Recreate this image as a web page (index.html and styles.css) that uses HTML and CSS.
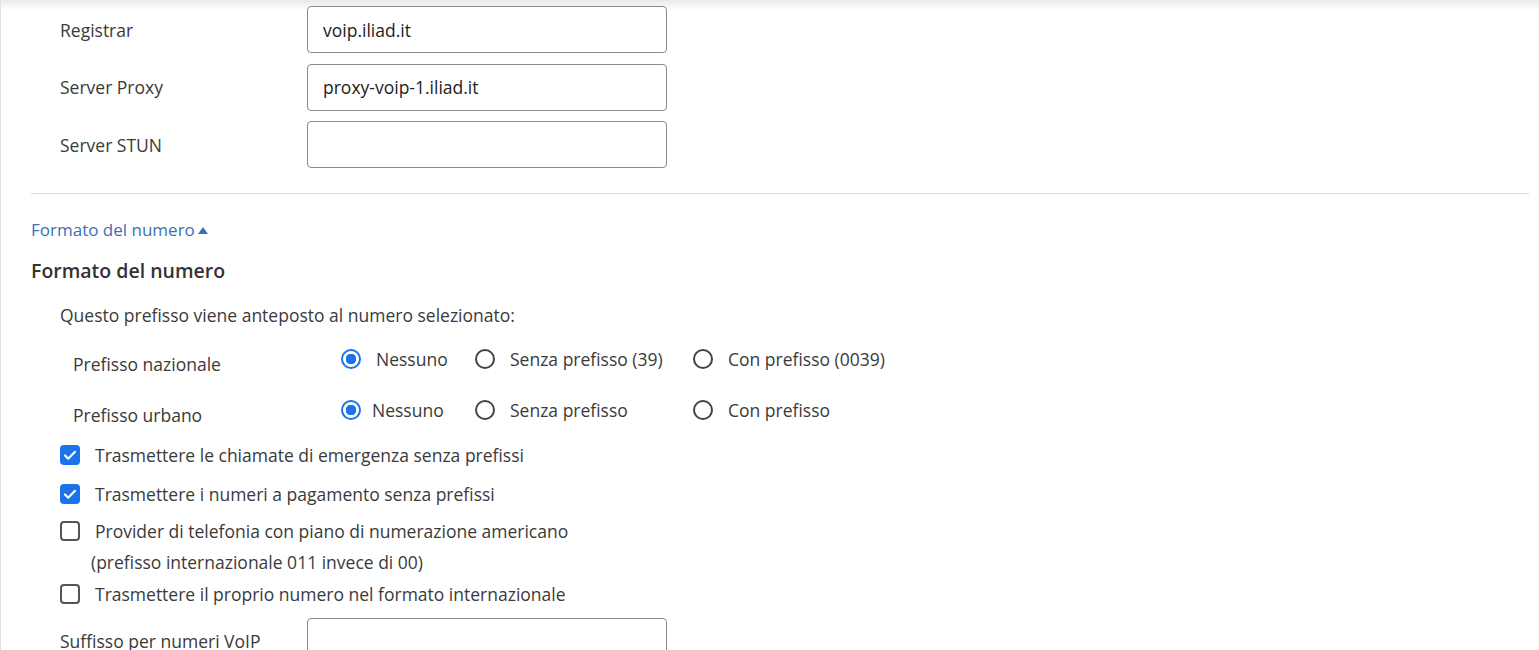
FILE: index.html
```html
<!DOCTYPE html>
<html lang="it">
<head>
    <meta charset="UTF-8">
    <title>Telefonia - Account VoIP</title>
    <link rel="stylesheet" href="styles.css">
</head>
<body>
    <div class="page">
        <div class="field-row">
            <label class="field-label" for="registrar">Registrar</label>
            <input class="text-input" id="registrar" type="text" value="voip.iliad.it">
        </div>
        <div class="field-row">
            <label class="field-label" for="proxy">Server Proxy</label>
            <input class="text-input" id="proxy" type="text" value="proxy-voip-1.iliad.it">
        </div>
        <div class="field-row">
            <label class="field-label" for="stun">Server STUN</label>
            <input class="text-input" id="stun" type="text" value="">
        </div>

        <hr class="divider">

        <a class="toggle-link" href="#">Formato del numero<span class="caret"></span></a>
        <h2 class="section-title">Formato del numero</h2>

        <p class="hint">Questo prefisso viene anteposto al numero selezionato:</p>

        <div class="radio-row">
            <span class="radio-label">Prefisso nazionale</span>
            <div class="radio-options">
                <label class="radio"><span class="dot checked"></span><span class="opt-text">Nessuno</span></label>
                <label class="radio"><span class="dot"></span>Senza prefisso (39)</label>
                <label class="radio"><span class="dot"></span>Con prefisso (0039)</label>
            </div>
        </div>
        <div class="radio-row second">
            <span class="radio-label">Prefisso urbano</span>
            <div class="radio-options">
                <label class="radio"><span class="dot checked"></span><span class="opt-text tight">Nessuno</span></label>
                <label class="radio"><span class="dot"></span>Senza prefisso</label>
                <label class="radio"><span class="dot"></span>Con prefisso</label>
            </div>
        </div>

        <ul class="checks">
            <li class="check"><span class="box checked"></span>Trasmettere le chiamate di emergenza senza prefissi</li>
            <li class="check"><span class="box checked"></span>Trasmettere i numeri a pagamento senza prefissi</li>
            <li class="check multi"><span class="box"></span>Provider di telefonia con piano di numerazione americano
                <span class="check-note">(prefisso internazionale 011 invece di 00)</span></li>
            <li class="check"><span class="box"></span>Trasmettere il proprio numero nel formato internazionale</li>
        </ul>

        <div class="field-row last">
            <label class="field-label" for="suffix">Suffisso per numeri VoIP</label>
            <input class="text-input" id="suffix" type="text" value="">
        </div>
    </div>
</body>
</html>
```

FILE: styles.css
```css
body {
    margin: 0;
    font-family: 'Open Sans', Lato, sans-serif;
    font-size: 17.5px;
    line-height: 20px;
    color: #3a3a3a;
    background: #fff;
}
.page {
    height: 646px;
    overflow: hidden;
    border-left: 1px solid #e2e2e2;
    border-bottom: 1px solid #dcdcdc;
    background: linear-gradient(#e9e9e9, #fff 10px) no-repeat;
    padding: 6px 10px 0 30px;
}
.field-row {
    display: flex;
    align-items: center;
    margin-bottom: 10.5px;
}
.field-label {
    width: 276px;
    padding-left: 29px;
    box-sizing: border-box;
}
.text-input {
    width: 360px;
    height: 47px;
    box-sizing: border-box;
    border: 1px solid #8a8a8a;
    border-radius: 4px;
    padding: 0 15px;
    font: inherit;
    color: #222;
}
.divider {
    border: none;
    border-top: 1px solid #d9d9d9;
    margin: 25px 0 0;
}
.toggle-link {
    display: inline-block;
    margin-top: 26px;
    color: #3b6fb6;
    text-decoration: none;
    font-size: 17px;
}
.caret {
    display: inline-block;
    width: 0;
    height: 0;
    margin-left: 3px;
    border-left: 5px solid transparent;
    border-right: 5px solid transparent;
    border-bottom: 7px solid #3b6fb6;
    vertical-align: 2px;
}
.section-title {
    font-size: 19.5px;
    line-height: 24px;
    font-weight: 600;
    color: #333;
    margin: 19px 0 0;
}
.hint {
    margin: 22px 0 0 29px;
}
.radio-row {
    display: flex;
    align-items: flex-start;
    margin-top: 24px;
}
.radio-row.second {
    margin-top: 26px;
}
.radio-label {
    width: 310px;
    padding-left: 42px;
    padding-top: 5px;
    box-sizing: border-box;
}
.radio-options {
    display: grid;
    grid-template-columns: 134px 218px auto;
}
.radio {
    display: flex;
    align-items: center;
}
.dot {
    width: 20px;
    height: 20px;
    box-sizing: border-box;
    border: 2px solid #444;
    border-radius: 50%;
    margin-right: 15px;
    flex-shrink: 0;
}
.dot.checked {
    border-color: #1a73e8;
    background: radial-gradient(circle, #1a73e8 5px, #fff 5.5px);
}
.opt-text.tight {
    margin-left: -4px;
}
.checks {
    list-style: none;
    margin: 20px 0 0 29px;
    padding: 0;
}
.check {
    display: flex;
    align-items: center;
    flex-wrap: wrap;
    margin-bottom: 19px;
}
.check:nth-child(2) {
    margin-bottom: 17px;
}
.check.multi {
    margin-bottom: 12px;
}
.check-note {
    width: 100%;
    padding-left: 31px;
    margin-top: 11px;
}
.box {
    width: 20px;
    height: 20px;
    box-sizing: border-box;
    border: 2px solid #555;
    border-radius: 4px;
    margin-right: 15px;
}
.box.checked {
    border: none;
    background: #1a73e8 url("data:image/svg+xml,%3Csvg xmlns='http://www.w3.org/2000/svg' viewBox='0 0 20 20'%3E%3Cpath d='M5 10.5l3.2 3.2L15 6.8' fill='none' stroke='white' stroke-width='2.2' stroke-linecap='round' stroke-linejoin='round'/%3E%3C/svg%3E") center/20px no-repeat;
}
.checks .check:last-child {
    margin-bottom: 0;
}
.field-row.last {
    margin-top: 14px;
    align-items: flex-start;
}
.field-row.last .field-label {
    padding-top: 13px;
}
```
